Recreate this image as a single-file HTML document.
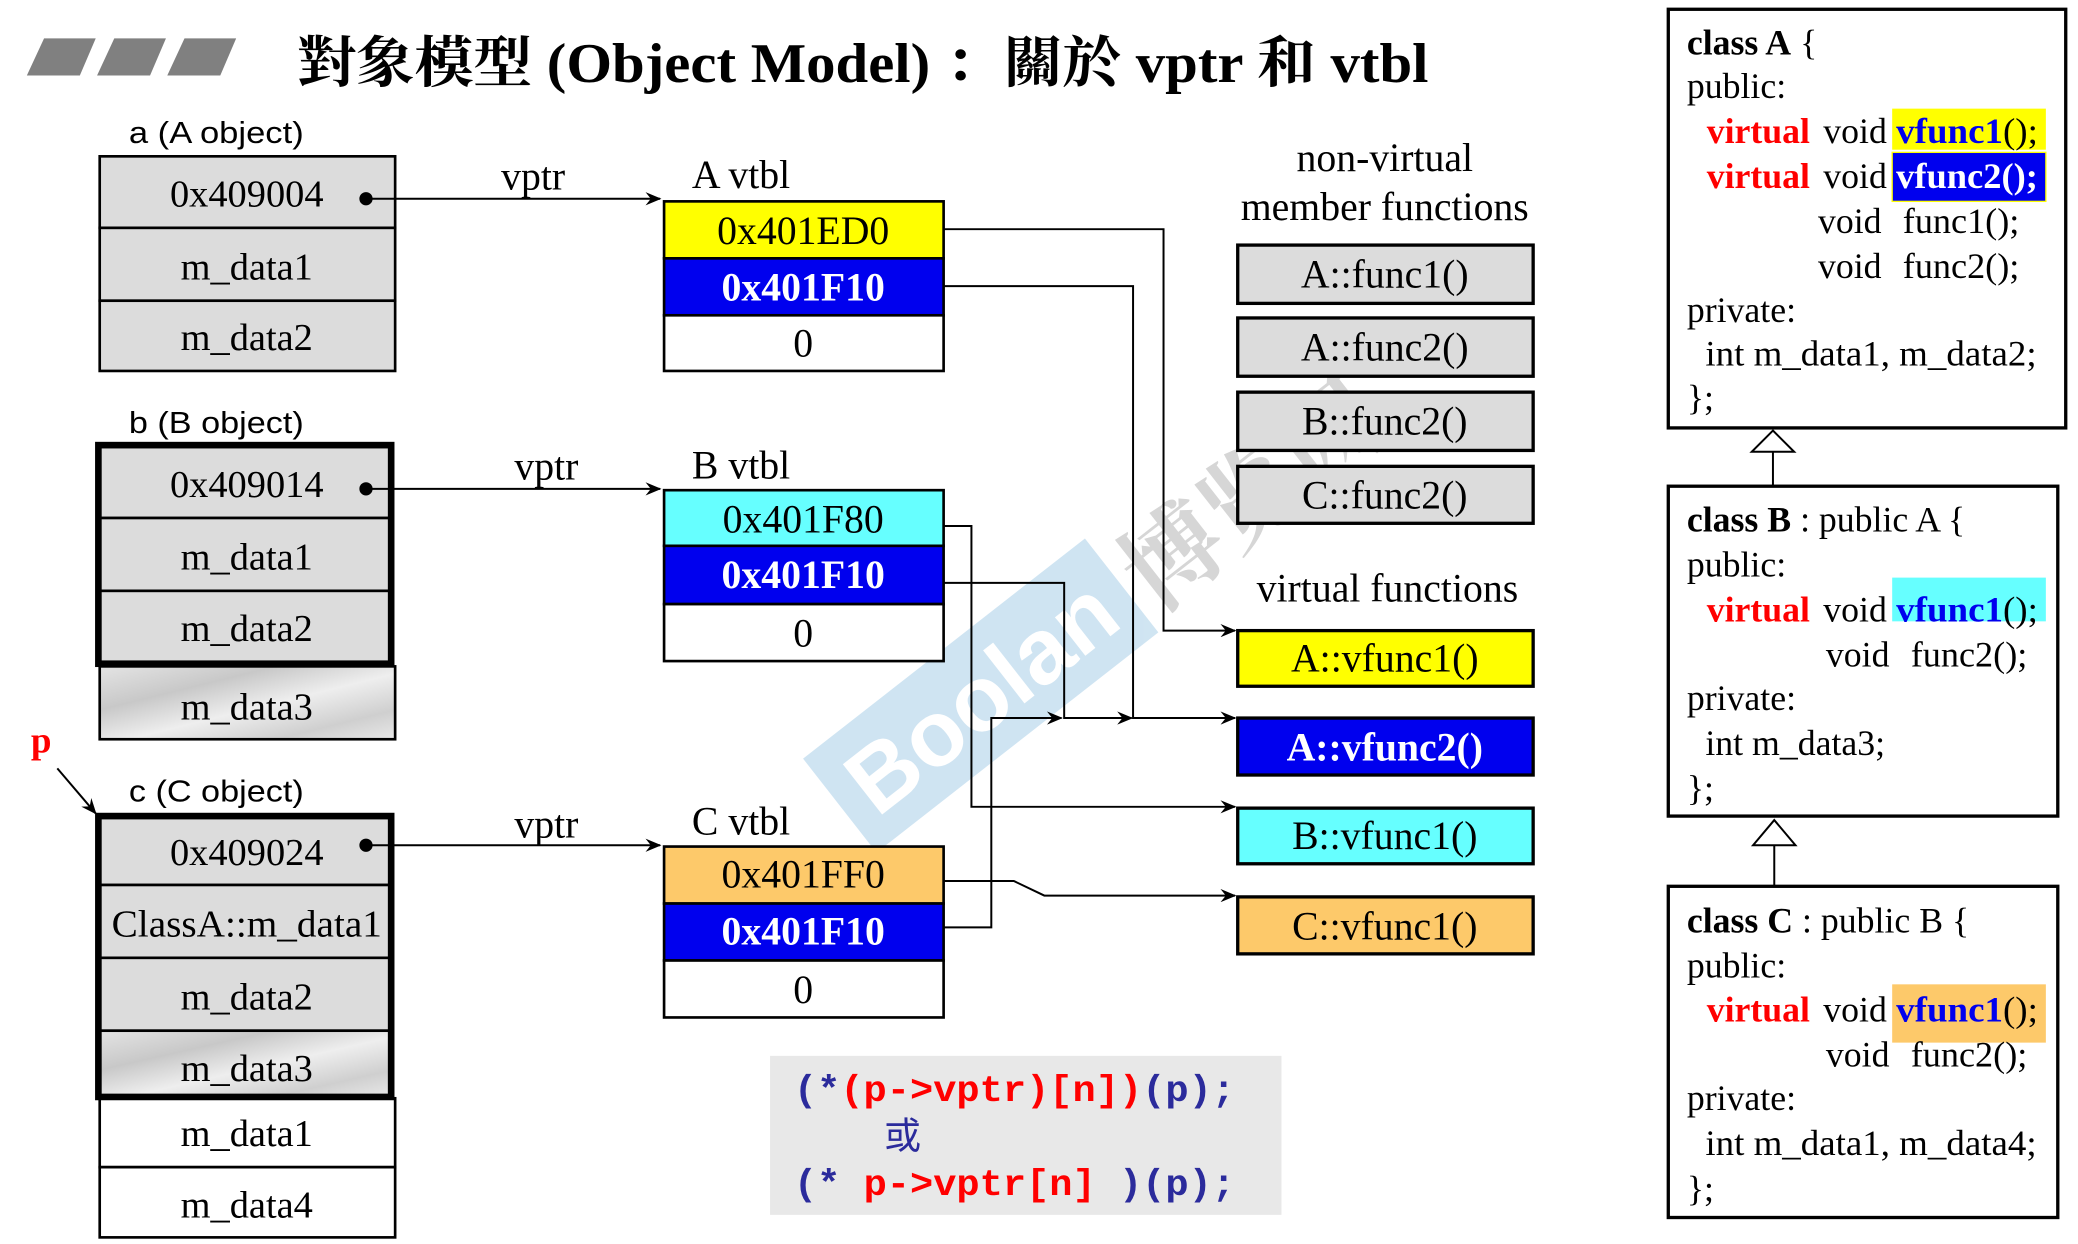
<!DOCTYPE html>
<html><head><meta charset="utf-8"><style>
html,body{margin:0;padding:0;background:#fff;}
svg{display:block;}
.s{font-family:"Liberation Serif","Noto Serif CJK SC",serif;}
.a{font-family:"Liberation Sans",sans-serif;}
.m{font-family:"Liberation Mono","Noto Sans CJK SC",monospace;font-weight:bold;}
</style></head><body>
<svg width="2078" height="1244" viewBox="0 0 1568 939" xmlns="http://www.w3.org/2000/svg">
<defs>
<marker id="ar" markerWidth="12" markerHeight="10" refX="11" refY="5" orient="auto" markerUnits="userSpaceOnUse">
<path d="M0,0 L12,5 L0,10 L4,5 Z" fill="#000"/></marker>
<linearGradient id="mar" x1="0" y1="0" x2="1" y2="1">
<stop offset="0" stop-color="#e4e4e4"/><stop offset="0.3" stop-color="#c8c8c8"/><stop offset="0.55" stop-color="#eeeeee"/><stop offset="0.8" stop-color="#cfcfcf"/><stop offset="1" stop-color="#e8e8e8"/></linearGradient>
</defs>

<!-- title -->
<g fill="#808080">
<polygon points="33,29 72,29 60,57 20,57"/>
<polygon points="86,29 125,29 113,57 73,57"/>
<polygon points="139,29 178,29 166,57 126,57"/>
</g>
<text class="s" x="224" y="62" font-size="42" font-weight="bold" textLength="854" lengthAdjust="spacingAndGlyphs">對象模型 (Object Model) ：關於 vptr 和 vtbl</text>

<!-- watermark -->
<g transform="translate(740,525) rotate(-38)" opacity="0.55">
<rect x="-135" y="-45" width="270" height="90" fill="#a9cfe8"/>
<text class="a" x="0" y="25" font-size="70" font-weight="bold" fill="#fff" text-anchor="middle">Boolan</text>
</g>
<text class="s" x="830" y="420" font-size="75" font-weight="bold" fill="#bbb" opacity="0.6" transform="rotate(-38 915 380)">博览网</text>

<!-- object a -->
<text class="a" x="97" y="108" font-size="23" textLength="132" lengthAdjust="spacingAndGlyphs">a (A object)</text>
<g stroke="#000" stroke-width="2" fill="#dcdcdc">
<rect x="75" y="118" width="223" height="54"/>
<rect x="75" y="172" width="223" height="55"/>
<rect x="75" y="227" width="223" height="53"/>
</g>
<g class="s" font-size="29" text-anchor="middle">
<text x="186" y="156">0x409004</text>
<text x="186" y="211">m_data1</text>
<text x="186" y="264">m_data2</text>
</g>

<!-- object b -->
<text class="a" x="97" y="327" font-size="23" textLength="132" lengthAdjust="spacingAndGlyphs">b (B object)</text>
<rect x="75" y="503" width="223" height="55" fill="url(#mar)" stroke="#000" stroke-width="2"/>
<g stroke="#000" stroke-width="2" fill="#dcdcdc">
<rect x="74" y="336" width="221" height="55"/>
<rect x="74" y="391" width="221" height="55"/>
<rect x="74" y="446" width="221" height="55"/>
</g>
<rect x="74" y="336" width="221" height="165" fill="none" stroke="#000" stroke-width="5"/>
<g class="s" font-size="29" text-anchor="middle">
<text x="186" y="375">0x409014</text>
<text x="186" y="430">m_data1</text>
<text x="186" y="484">m_data2</text>
<text x="186" y="543">m_data3</text>
</g>

<!-- p -->
<text class="s" x="23" y="568" font-size="28" font-weight="bold" fill="#f00">p</text>
<line x1="43" y1="580" x2="72" y2="614" stroke="#000" stroke-width="1.5" marker-end="url(#ar)"/>

<!-- object c -->
<text class="a" x="97" y="605" font-size="23" textLength="132" lengthAdjust="spacingAndGlyphs">c (C object)</text>
<g stroke="#000" stroke-width="2">
<rect x="74" y="616" width="221" height="52" fill="#dcdcdc"/>
<rect x="74" y="668" width="221" height="55" fill="#dcdcdc"/>
<rect x="74" y="723" width="221" height="55" fill="#dcdcdc"/>
<rect x="74" y="778" width="221" height="50" fill="url(#mar)"/>
<rect x="75" y="829" width="223" height="52" fill="#fff"/>
<rect x="75" y="881" width="223" height="53" fill="#fff"/>
</g>
<rect x="74" y="616" width="221" height="212" fill="none" stroke="#000" stroke-width="5"/>
<g class="s" font-size="29" text-anchor="middle">
<text x="186" y="653">0x409024</text>
<text x="186" y="707" textLength="204" lengthAdjust="spacingAndGlyphs">ClassA::m_data1</text>
<text x="186" y="762">m_data2</text>
<text x="186" y="816">m_data3</text>
<text x="186" y="865">m_data1</text>
<text x="186" y="919">m_data4</text>
</g>

<!-- vptr arrows -->
<g fill="#000"><circle cx="276" cy="150" r="5"/><circle cx="276" cy="369" r="5"/><circle cx="276" cy="638" r="5"/></g>
<g stroke="#000" stroke-width="1.5" fill="none" marker-end="url(#ar)">
<line x1="276" y1="150" x2="498" y2="150"/>
<line x1="276" y1="369" x2="498" y2="369"/>
<line x1="276" y1="638" x2="498" y2="638"/>
</g>
<g class="s" font-size="30">
<text x="378" y="143">vptr</text>
<text x="388" y="362">vptr</text>
<text x="388" y="632">vptr</text>
<text x="522" y="142">A vtbl</text>
<text x="522" y="361">B vtbl</text>
<text x="522" y="630">C vtbl</text>
</g>

<!-- vtbls -->
<g stroke="#000" stroke-width="2">
<rect x="501" y="152" width="211" height="43" fill="#ffff00"/>
<rect x="501" y="195" width="211" height="43" fill="#0000ee"/>
<rect x="501" y="238" width="211" height="42" fill="#fff"/>
<rect x="501" y="370" width="211" height="42" fill="#66ffff"/>
<rect x="501" y="412" width="211" height="44" fill="#0000ee"/>
<rect x="501" y="456" width="211" height="43" fill="#fff"/>
<rect x="501" y="639" width="211" height="43" fill="#fdc96a"/>
<rect x="501" y="682" width="211" height="43" fill="#0000ee"/>
<rect x="501" y="725" width="211" height="43" fill="#fff"/>
</g>
<g class="s" font-size="30" text-anchor="middle">
<text x="606" y="184">0x401ED0</text>
<text x="606" y="227" fill="#fff" font-weight="bold">0x401F10</text>
<text x="606" y="269">0</text>
<text x="606" y="402">0x401F80</text>
<text x="606" y="444" fill="#fff" font-weight="bold">0x401F10</text>
<text x="606" y="488">0</text>
<text x="606" y="670">0x401FF0</text>
<text x="606" y="713" fill="#fff" font-weight="bold">0x401F10</text>
<text x="606" y="757">0</text>
</g>

<!-- function boxes -->
<g class="s" font-size="30" text-anchor="middle">
<text x="1045" y="129">non-virtual</text>
<text x="1045" y="166">member functions</text>
<text x="1047" y="454">virtual functions</text>
</g>
<g stroke="#000" stroke-width="2.5">
<rect x="934" y="185" width="223" height="44" fill="#dcdcdc"/>
<rect x="934" y="240" width="223" height="44" fill="#dcdcdc"/>
<rect x="934" y="296" width="223" height="44" fill="#dcdcdc"/>
<rect x="934" y="352" width="223" height="43" fill="#dcdcdc"/>
<rect x="934" y="476" width="223" height="42" fill="#ffff00"/>
<rect x="934" y="542" width="223" height="43" fill="#0000ee"/>
<rect x="934" y="610" width="223" height="42" fill="#66ffff"/>
<rect x="934" y="677" width="223" height="43" fill="#fdc96a"/>
</g>
<g class="s" font-size="30" text-anchor="middle">
<text x="1045" y="217">A::func1()</text>
<text x="1045" y="272">A::func2()</text>
<text x="1045" y="328">B::func2()</text>
<text x="1045" y="384">C::func2()</text>
<text x="1045" y="507">A::vfunc1()</text>
<text x="1045" y="574" fill="#fff" font-weight="bold">A::vfunc2()</text>
<text x="1045" y="641">B::vfunc1()</text>
<text x="1045" y="709">C::vfunc1()</text>
</g>

<!-- connectors -->
<g stroke="#000" stroke-width="1.5" fill="none" marker-end="url(#ar)">
<polyline points="712,173 878,173 878,476 932,476"/>
<polyline points="712,216 855,216 855,542 932,542"/>
<polyline points="712,397 733,397 733,609 932,609"/>
<polyline points="712,440 803,440 803,542 854,542"/>
<polyline points="712,665 765,665 788,676 932,676"/>
<polyline points="712,700 748,700 748,542 801,542"/>
</g>

<!-- code box -->
<rect x="581" y="797" width="386" height="120" fill="#e8e8e8"/>
<text class="m" x="599" y="831" font-size="28" textLength="333" lengthAdjust="spacingAndGlyphs"><tspan fill="#2b2b9c">(*</tspan><tspan fill="#f00">(p-&gt;vptr)[n]</tspan><tspan fill="#f00">)</tspan><tspan fill="#2b2b9c">(p);</tspan></text>
<text x="667" y="867" font-size="28" fill="#2b2b9c" style="font-family:'Noto Sans CJK SC',sans-serif">或</text>
<text class="m" x="599" y="902" font-size="28" textLength="333" lengthAdjust="spacingAndGlyphs" xml:space="preserve"><tspan fill="#2b2b9c">(* </tspan><tspan fill="#f00">p-&gt;vptr[n]</tspan><tspan fill="#2b2b9c"> )(p);</tspan></text>

<!-- class boxes -->
<g stroke="#000" stroke-width="2.5" fill="#fff">
<rect x="1259" y="7" width="300" height="316"/>
<rect x="1259" y="367" width="294" height="249"/>
<rect x="1259" y="669" width="294" height="250"/>
</g>
<g stroke="#000" stroke-width="1.5" fill="#fff">
<line x1="1338" y1="341" x2="1338" y2="367"/>
<polygon points="1338,325 1322,341 1354,341"/>
<line x1="1339" y1="638" x2="1339" y2="669"/>
<polygon points="1339,619 1323,638 1355,638"/>
</g>
<rect x="1428" y="82" width="116" height="31" fill="#ffff00"/>
<rect x="1428" y="115" width="116" height="37" fill="#0000ee" stroke="#ffff00" stroke-width="1"/>
<rect x="1428" y="436" width="116" height="33" fill="#66ffff"/>
<rect x="1428" y="743" width="116" height="44" fill="#fdc96a"/>
<g class="s" font-size="27">
<text x="1273" y="41"><tspan font-weight="bold">class A</tspan> {</text>
<text x="1273" y="74">public:</text>
<text x="1288" y="108" fill="#f00" font-weight="bold">virtual</text><text x="1376" y="108">void</text><text x="1431" y="108" textLength="107" lengthAdjust="spacingAndGlyphs"><tspan fill="#00e" font-weight="bold">vfunc1</tspan>();</text>
<text x="1288" y="142" fill="#f00" font-weight="bold">virtual</text><text x="1376" y="142">void</text><text x="1431" y="142" fill="#fff" font-weight="bold" textLength="107" lengthAdjust="spacingAndGlyphs">vfunc2();</text>
<text x="1372" y="176">void</text><text x="1436" y="176" textLength="88" lengthAdjust="spacingAndGlyphs">func1();</text>
<text x="1372" y="210">void</text><text x="1436" y="210" textLength="88" lengthAdjust="spacingAndGlyphs">func2();</text>
<text x="1273" y="243">private:</text>
<text x="1287" y="276" textLength="250" lengthAdjust="spacingAndGlyphs">int m_data1, m_data2;</text>
<text x="1273" y="309">};</text>

<text x="1273" y="401"><tspan font-weight="bold">class B</tspan> : public A {</text>
<text x="1273" y="435">public:</text>
<text x="1288" y="469" fill="#f00" font-weight="bold">virtual</text><text x="1376" y="469">void</text><text x="1431" y="469" textLength="107" lengthAdjust="spacingAndGlyphs"><tspan fill="#00e" font-weight="bold">vfunc1</tspan>();</text>
<text x="1378" y="503">void</text><text x="1442" y="503" textLength="88" lengthAdjust="spacingAndGlyphs">func2();</text>
<text x="1273" y="536">private:</text>
<text x="1287" y="570">int m_data3;</text>
<text x="1273" y="604">};</text>

<text x="1273" y="704"><tspan font-weight="bold">class C</tspan> : public B {</text>
<text x="1273" y="738">public:</text>
<text x="1288" y="771" fill="#f00" font-weight="bold">virtual</text><text x="1376" y="771">void</text><text x="1431" y="771" textLength="107" lengthAdjust="spacingAndGlyphs"><tspan fill="#00e" font-weight="bold">vfunc1</tspan>();</text>
<text x="1378" y="805">void</text><text x="1442" y="805" textLength="88" lengthAdjust="spacingAndGlyphs">func2();</text>
<text x="1273" y="838">private:</text>
<text x="1287" y="872" textLength="250" lengthAdjust="spacingAndGlyphs">int m_data1, m_data4;</text>
<text x="1273" y="906">};</text>
</g>
</svg>
</body></html>
